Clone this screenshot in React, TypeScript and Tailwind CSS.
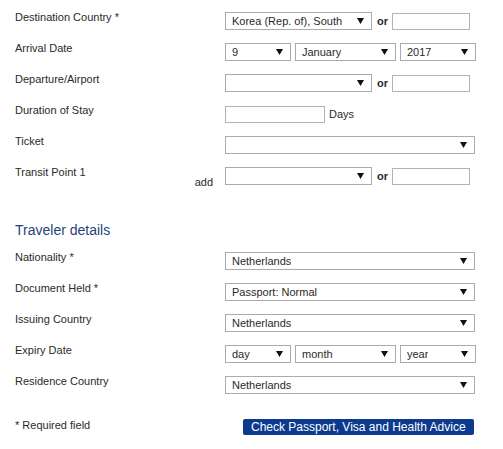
import type { ReactNode } from "react";

function Arrow() {
  return (
    <svg width="7" height="6" viewBox="0 0 7 6" className="shrink-0">
      <polygon points="0,0 7,0 3.5,6" fill="#111" />
    </svg>
  );
}

function Select({ value = "", w }: { value?: string; w: string }) {
  return (
    <div
      className={`${w} flex h-[18px] items-center justify-between border border-[#ababab] bg-white pl-[6px] pr-[7px] text-[11px] text-[#2a2a2a]`}
    >
      <span className="truncate">{value}</span>
      <Arrow />
    </div>
  );
}

function TextBox({ w }: { w: string }) {
  return <div className={`${w} h-[17px] border border-[#b3b3b3] bg-white`} />;
}

function Row({ label, extra, children }: { label: string; extra?: ReactNode; children: ReactNode }) {
  return (
    <div className="flex h-[18px]">
      <div className="flex w-[210px] shrink-0 justify-between text-[11px] leading-[11px] text-[#2a2a2a]">
        <span>{label}</span>
        {extra}
      </div>
      <div className="flex items-center gap-[4px]">{children}</div>
    </div>
  );
}

function Or() {
  return <span className="pl-[1px] text-[11px] font-bold text-[#2a2a2a]">or</span>;
}

export default function App() {
  return (
    <div className="min-h-[449px] w-[503px] bg-white px-[15px] pt-[12px] font-['Liberation_Sans',Arial,sans-serif]">
      <div className="flex flex-col gap-[13px]">
        <Row label="Destination Country *">
          <Select w="w-[147px]" value="Korea (Rep. of), South" />
          <Or />
          <TextBox w="w-[78px]" />
        </Row>
        <Row label="Arrival Date">
          <Select w="w-[66px]" value="9" />
          <Select w="w-[101px]" value="January" />
          <Select w="w-[76px]" value="2017" />
        </Row>
        <Row label="Departure/Airport">
          <Select w="w-[147px]" />
          <Or />
          <TextBox w="w-[78px]" />
        </Row>
        <Row label="Duration of Stay">
          <TextBox w="w-[100px]" />
          <span className="text-[11px] text-[#2a2a2a]">Days</span>
        </Row>
        <Row label="Ticket">
          <Select w="w-[250px]" />
        </Row>
        <Row
          label="Transit Point 1"
          extra={<span className="mr-[12px] self-end translate-y-[3px] text-[11px] leading-[11px]">add</span>}
        >
          <Select w="w-[147px]" />
          <Or />
          <TextBox w="w-[78px]" />
        </Row>
      </div>

      <h2 className="mt-[37px] text-[14px] leading-[16px] text-[#27427a]">Traveler details</h2>

      <div className="mt-[14px] flex flex-col gap-[13px]">
        <Row label="Nationality *">
          <Select w="w-[250px]" value="Netherlands" />
        </Row>
        <Row label="Document Held *">
          <Select w="w-[250px]" value="Passport: Normal" />
        </Row>
        <Row label="Issuing Country">
          <Select w="w-[250px]" value="Netherlands" />
        </Row>
        <Row label="Expiry Date">
          <Select w="w-[66px]" value="day" />
          <Select w="w-[101px]" value="month" />
          <Select w="w-[76px]" value="year" />
        </Row>
        <Row label="Residence Country">
          <Select w="w-[250px]" value="Netherlands" />
        </Row>
      </div>

      <div className="mt-[25px] flex items-start">
        <span className="w-[228px] shrink-0 pt-px text-[11px] leading-[11px] text-[#2a2a2a]">* Required field</span>
        <button className="h-[16px] rounded-[2px] bg-[#0b3a8f] px-[8px] text-[12px] leading-[16px] text-white">
          Check Passport, Visa and Health Advice
        </button>
      </div>
    </div>
  );
}
